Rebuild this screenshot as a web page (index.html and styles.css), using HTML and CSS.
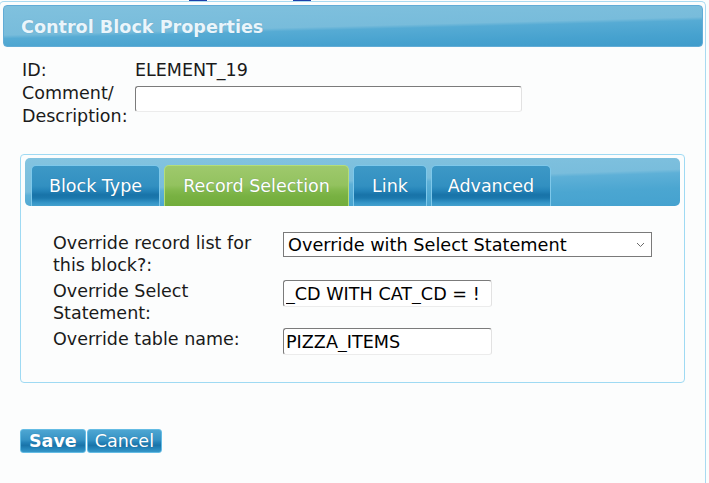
FILE: index.html
```html
<!DOCTYPE html>
<html>
<head>
<meta charset="utf-8">
<title>Control Block Properties</title>
<link rel="stylesheet" href="styles.css">
</head>
<body>
<div class="behind"><span class="mark m1"></span><span class="mark m2"></span></div>
<div class="dialog">
  <div class="titlebar"><h1 class="title">Control Block Properties</h1></div>
  <div class="dialog-body">
    <div class="field-row">
      <div class="lbl">ID:</div>
      <div class="val">ELEMENT_19</div>
    </div>
    <div class="field-row">
      <label class="lbl">Comment/<br>Description:</label>
      <input class="txt comment" type="text" value="">
    </div>

    <div class="tabpanel">
      <div class="tabbar">
        <div class="tab tab-type">Block Type</div>
        <div class="tab tab-rec active">Record Selection</div>
        <div class="tab tab-link">Link</div>
        <div class="tab tab-adv">Advanced</div>
      </div>
      <div class="tabcontent">
        <div class="frow">
          <label class="flbl">Override record list for<br>this block?:</label>
          <div class="selwrap">
            <select class="sel">
              <option>Override with Select Statement</option>
            </select>
            <svg class="chev" width="9" height="6" viewBox="0 0 9 6"><path d="M1 1 L4.5 4.5 L8 1" fill="none" stroke="#6b6b6b" stroke-width="1"/></svg>
          </div>
        </div>
        <div class="frow">
          <label class="flbl">Override Select<br>Statement:</label>
          <input class="txt short" type="text" value="_CD WITH CAT_CD = !">
        </div>
        <div class="frow">
          <label class="flbl">Override table name:</label>
          <input class="txt short" type="text" value="PIZZA_ITEMS">
        </div>
      </div>
    </div>

    <div class="buttons">
      <button class="btn save">Save</button>
      <button class="btn cancel">Cancel</button>
    </div>
  </div>
</div>
</body>
</html>
```
FILE: styles.css
```css
html, body {
  margin: 0;
  padding: 0;
  background: #fcfdfd;
}
body {
  font-family: "DejaVu Sans", Verdana, sans-serif;
  font-size: 17.5px;
  color: #1a1a1a;
  overflow: hidden;
  height: 483px;
}
.behind {
  height: 1px;
  display: flex;
}
.mark {
  display: block;
  height: 1px;
  width: 18px;
  background: #1c3fa8;
}
.m1 { margin-left: 189px; }
.m2 { margin-left: 86px; }

.dialog {
  margin-left: -1px;
  width: 707px;
  height: 482px;
  box-sizing: border-box;
  border-top: 1px solid #a9daf1;
  border-right: 1px solid #a9daf1;
  border-left: 1px solid #a9daf1;
  border-radius: 5px 5px 0 0;
  overflow: hidden;
}
.titlebar {
  margin: 3px 2px 0 3px;
  height: 40px;
  border: 1px solid #62acd6;
  border-radius: 4px;
  background: linear-gradient(178.5deg, #80c1de 0%, #78bcdb 50%, #56abd4 56%, #47a2cf 80%, #3f9ccb 100%);
  padding-left: 17px;
}
.title {
  margin: 0;
  font-size: 17.6px;
  font-weight: bold;
  line-height: 43px;
  color: #eaf5fb;
  text-shadow: 0 0 1px rgba(40, 110, 150, 0.4);
}
.dialog-body {
  padding: 12px 0 0 22px;
}
.field-row {
  display: flex;
  align-items: flex-start;
  line-height: 23px;
}
.lbl {
  width: 113px;
  flex: none;
}
.val {
  color: #1a1a1a;
}
.txt {
  box-sizing: border-box;
  font-family: "DejaVu Sans", Verdana, sans-serif;
  font-size: 17.6px;
  color: #000;
  background: #fff;
  border: 1px solid;
  border-color: #7b7b7b #e2e2e2 #ececec #7b7b7b;
  border-radius: 3px;
  padding: 0 2px;
  margin: 0;
  outline: none;
}
.comment {
  margin-top: 4px;
  width: 387px;
  height: 26px;
}

.tabpanel {
  margin-top: 26px;
  margin-left: -2px;
  width: 665px;
  box-sizing: border-box;
  border: 1px solid #9fdaf3;
  border-radius: 4px;
  padding: 3px 4px;
}
.tabbar {
  height: 48px;
  box-sizing: border-box;
  border-radius: 5px;
  background: linear-gradient(178deg, #84c4e0 0%, #79bddc 48%, #5eb0d7 53%, #4ba6d1 75%, #45a2cf 100%);
  padding: 7px 6px 0;
  display: flex;
  align-items: stretch;
  gap: 4px;
}
.tab {
  box-sizing: border-box;
  height: 41px;
  border: 1px solid #7ec8ea;
  border-bottom: none;
  border-radius: 5px 5px 0 0;
  color: #fff;
  line-height: 40px;
  text-align: center;
  background: linear-gradient(to bottom, #3d98c6 0%, #3290c1 50%, #2483b8 62%, #1873a8 72%, #1b78ad 80%, #3595c7 92%, #44a1ce 100%);
  text-shadow: 0 0 1px rgba(0, 50, 90, 0.35);
}
.tab-type { width: 129px; }
.tab-rec { width: 185px; }
.tab-link { width: 74px; }
.tab-adv { width: 120px; }
.tab.active {
  border-color: #b4dd7a;
  background: linear-gradient(to bottom, #9ec96c 0%, #93c25f 48%, #83b94d 60%, #78b142 75%, #72ad3b 100%);
}
.tabcontent {
  padding: 26px 0 24px 28px;
  display: flex;
  flex-direction: column;
  gap: 4px;
}
.frow {
  display: flex;
  align-items: flex-start;
}
.flbl {
  width: 230px;
  flex: none;
  line-height: 22px;
}
.selwrap {
  position: relative;
  width: 369px;
  height: 25px;
}
.sel {
  -webkit-appearance: none;
  appearance: none;
  box-sizing: border-box;
  width: 100%;
  height: 25px;
  margin: 0;
  padding: 0 4px;
  border: 1px solid #7a7a7a;
  border-radius: 0;
  background: #fff;
  font-family: "DejaVu Sans", Verdana, sans-serif;
  font-size: 17.7px;
  color: #000;
  outline: none;
}
.chev {
  position: absolute;
  right: 7px;
  top: 10px;
}
.short {
  width: 209px;
  height: 27px;
}

.buttons {
  margin-top: 46px;
  margin-left: -2px;
  display: flex;
  gap: 1px;
}
.btn {
  box-sizing: border-box;
  height: 24px;
  margin: 0;
  font-family: "DejaVu Sans", Verdana, sans-serif;
  font-size: 17.5px;
  line-height: 22px;
  color: #fff;
  border: 1px solid #64bce4;
  border-radius: 3px;
  background: linear-gradient(to bottom, #4ea6d2 0%, #3592c4 45%, #2280b6 58%, #1a74a9 70%, #2586bb 85%, #3797c8 100%);
  text-shadow: 0 0 1px rgba(0, 50, 90, 0.35);
}
.btn.save {
  font-weight: bold;
  padding: 0 8px;
}
.btn.cancel {
  padding: 0 7px;
}
```
